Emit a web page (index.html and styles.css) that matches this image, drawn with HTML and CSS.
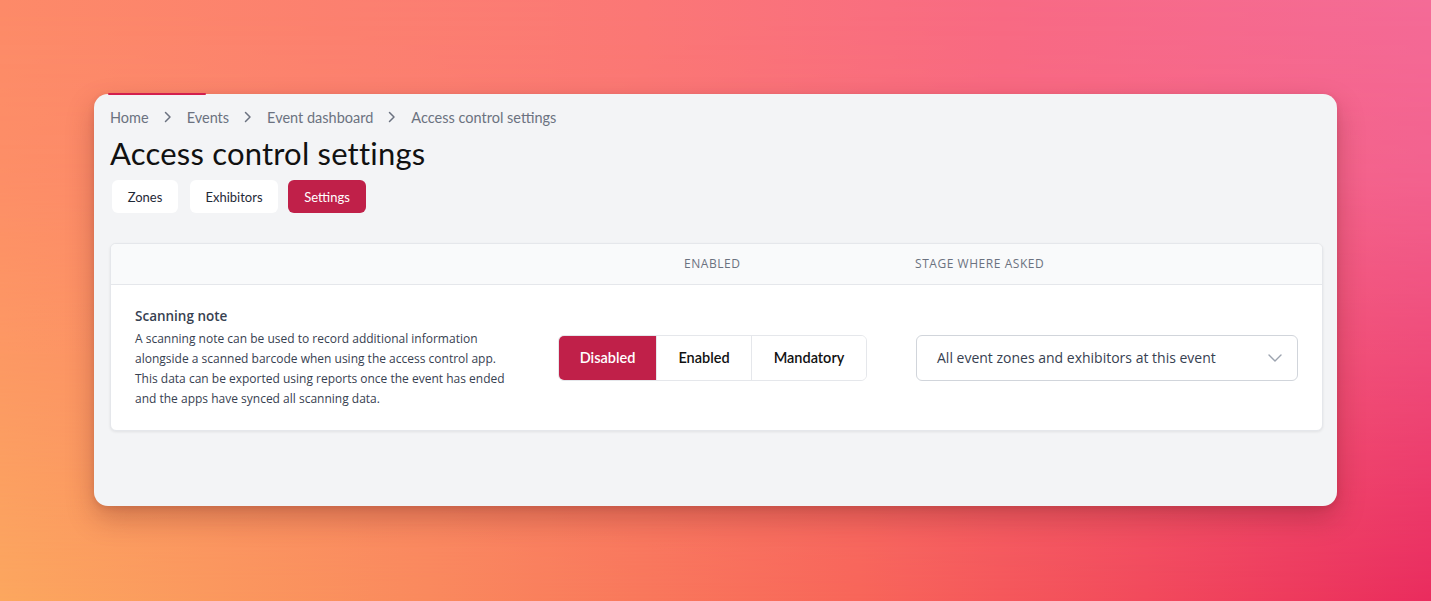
FILE: index.html
```html
<!DOCTYPE html>
<html lang="en">
<head>
<meta charset="utf-8">
<title>Access control settings</title>
<link rel="stylesheet" href="styles.css">
</head>
<body>
<div class="stage">
  <div class="window">
    <div class="tab-strip"></div>
    <nav class="breadcrumb">
      <span>Home</span>
      <svg class="crumb-sep" width="8" height="12" viewBox="0 0 8 12"><path d="M1.5 1.5 L6 6 L1.5 10.5" fill="none" stroke="#6b7280" stroke-width="1.5" stroke-linecap="round" stroke-linejoin="round"/></svg>
      <span>Events</span>
      <svg class="crumb-sep" width="8" height="12" viewBox="0 0 8 12"><path d="M1.5 1.5 L6 6 L1.5 10.5" fill="none" stroke="#6b7280" stroke-width="1.5" stroke-linecap="round" stroke-linejoin="round"/></svg>
      <span>Event dashboard</span>
      <svg class="crumb-sep" width="8" height="12" viewBox="0 0 8 12"><path d="M1.5 1.5 L6 6 L1.5 10.5" fill="none" stroke="#6b7280" stroke-width="1.5" stroke-linecap="round" stroke-linejoin="round"/></svg>
      <span>Access control settings</span>
    </nav>
    <h1 class="title">Access control settings</h1>
    <div class="tabs">
      <button class="tab tab-zones">Zones</button>
      <button class="tab tab-exhibitors">Exhibitors</button>
      <button class="tab tab-settings active">Settings</button>
    </div>
    <div class="card">
      <div class="card-head">
        <div class="head-cell head-first"></div>
        <div class="head-cell head-enabled">Enabled</div>
        <div class="head-cell head-stage">Stage where asked</div>
      </div>
      <div class="card-row">
        <div class="desc">
          <div class="desc-title">Scanning note</div>
          <p class="desc-text">A scanning note can be used to record additional information alongside a scanned barcode when using the access control app. This data can be exported using reports once the event has ended and the apps have synced all scanning data.</p>
        </div>
        <div class="segmented">
          <button class="seg seg-disabled active">Disabled</button>
          <button class="seg seg-enabled">Enabled</button>
          <button class="seg seg-mandatory">Mandatory</button>
        </div>
        <div class="select">
          <span>All event zones and exhibitors at this event</span>
          <svg width="14" height="8" viewBox="0 0 14 8"><path d="M1 1 L7 7 L13 1" fill="none" stroke="#9ca3af" stroke-width="1.4" stroke-linecap="round" stroke-linejoin="round"/></svg>
        </div>
      </div>
    </div>
  </div>
</div>
</body>
</html>
```

FILE: styles.css
```css
* { box-sizing: border-box; }
html, body { margin: 0; padding: 0; }
body {
  width: 1431px;
  height: 601px;
  overflow: hidden;
  font-family: "Open Sans", "Liberation Sans", sans-serif;
}
.stage {
  position: relative;
  width: 1431px;
  height: 601px;
  padding: 94px 0 0 94px;
  background: linear-gradient(to right, #fca75f 0%, #fa8a5e 30%, #f8665a 60%, #f24a5c 80%, #ea2c5e 100%);
}
.stage::before {
  content: "";
  position: absolute;
  inset: 0;
  background: linear-gradient(to right, #fd8a68 0%, #fb7776 45%, #f86a84 70%, #f46b97 100%);
  -webkit-mask-image: linear-gradient(to bottom, #000 0%, rgba(0,0,0,0.85) 30%, rgba(0,0,0,0) 100%);
  mask-image: linear-gradient(to bottom, #000 0%, rgba(0,0,0,0.85) 30%, rgba(0,0,0,0) 100%);
}
.window {
  position: relative;
  width: 1243px;
  height: 412px;
  background: #f3f4f6;
  border-radius: 14px;
  box-shadow: 0 12px 28px rgba(90, 20, 20, 0.28), 0 2px 6px rgba(90, 20, 20, 0.12);
  padding: 13px 14px 0 16px;
}
.tab-strip {
  position: absolute;
  left: 14px;
  top: -1px;
  width: 98px;
  height: 2px;
  background: #d31f4e;
  border-radius: 2px;
}
.breadcrumb {
  display: flex;
  align-items: center;
  gap: 15px;
  height: 20px;
  font-family: Lato, "Open Sans", sans-serif;
  font-size: 14.5px;
  color: #6b7280;
}
.crumb-sep { display: block; }
.title {
  margin: 8px 0 0 0;
  font-family: Lato, "Open Sans", sans-serif;
  font-weight: 400;
  font-size: 31px;
  line-height: 36px;
  color: #111111;
  letter-spacing: 0.2px;
}
.tabs {
  display: flex;
  margin: 9px 0 0 2px;
}
.tab {
  height: 33px;
  padding: 0;
  border: none;
  border-radius: 6px;
  background: #ffffff;
  color: #1f2937;
  font-family: Lato, "Open Sans", sans-serif;
  font-size: 13px;
  text-align: center;
  cursor: pointer;
}
.tab-zones { width: 66px; }
.tab-exhibitors { width: 88px; margin-left: 12px; }
.tab-settings { width: 78px; margin-left: 10px; }
.tab.active {
  background: #c02049;
  color: #ffffff;
}
.card {
  margin-top: 30px;
  width: 1213px;
  background: #ffffff;
  border: 1px solid #e5e7eb;
  border-radius: 6px;
  box-shadow: 0 1px 3px rgba(0, 0, 0, 0.08);
  overflow: hidden;
}
.card-head {
  display: grid;
  grid-template-columns: 549px 231px 1fr;
  height: 41px;
  background: #f9fafb;
  border-bottom: 1px solid #e5e7eb;
  align-items: center;
}
.head-cell {
  padding-left: 24px;
  padding-bottom: 2px;
  font-size: 12px;
  text-transform: uppercase;
  letter-spacing: 0.55px;
  color: #6b7280;
}
.card-row {
  display: flex;
  align-items: center;
  padding: 21px 24px 21px 24px;
}
.desc {
  width: 423px;
  flex: none;
}
.desc-title {
  font-size: 13.5px;
  font-weight: 600;
  line-height: 20px;
  color: #374151;
}
.desc-text {
  margin: 3px 0 0 0;
  font-size: 12px;
  line-height: 20px;
  color: #374151;
  width: 375px;
  letter-spacing: 0;
}
.segmented {
  display: flex;
  height: 46px;
  border: 1px solid #e5e7eb;
  border-radius: 6px;
  overflow: hidden;
  flex: none;
}
.seg {
  border: none;
  background: #ffffff;
  color: #111111;
  font-family: Lato, "Open Sans", sans-serif;
  font-size: 14.5px;
  font-weight: 600;
  cursor: pointer;
  padding: 0;
}
.seg + .seg { border-left: 1px solid #e5e7eb; }
.seg-disabled { width: 97px; }
.seg-enabled { width: 95px; }
.seg-mandatory { width: 115px; }
.seg.active {
  background: #c02049;
  color: #ffffff;
}
.select {
  margin-left: 49px;
  width: 384px;
  height: 46px;
  display: flex;
  align-items: center;
  justify-content: space-between;
  padding: 0 15px 0 20px;
  border: 1px solid #d1d5db;
  border-radius: 6px;
  font-size: 14px;
  color: #374151;
}
.select svg { display: block; }
```
